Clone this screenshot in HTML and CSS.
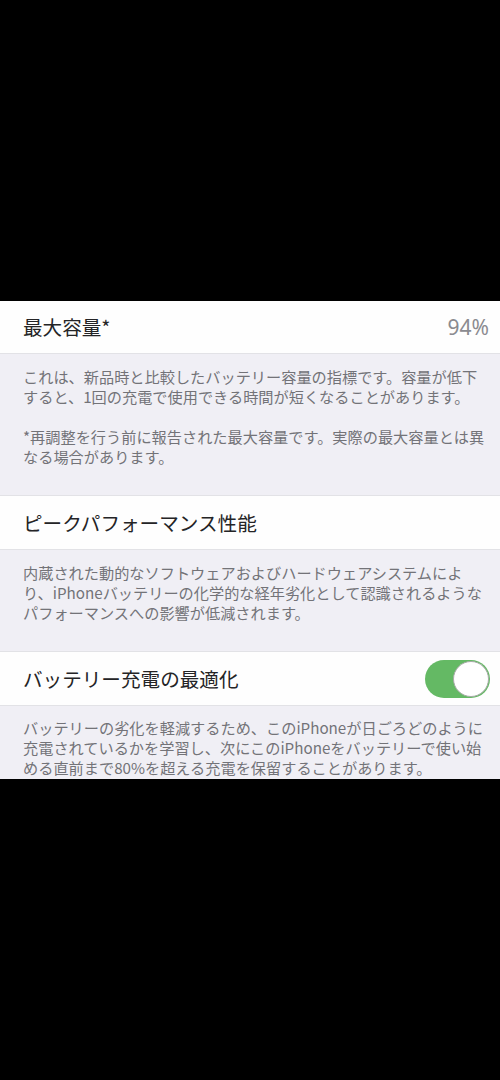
FILE: index.html
```html
<!DOCTYPE html>
<html lang="ja">
<head>
<meta charset="utf-8">
<title>バッテリーの状態</title>
<link rel="stylesheet" href="styles.css">
</head>
<body>
<div class="screen">
  <div class="top-black"></div>
  <div class="panel">
    <div class="row row-first">
      <span class="row-title">最大容量*</span>
      <span class="row-value">94%</span>
    </div>
    <div class="footer">
      <p>これは、新品時と比較したバッテリー容量の指標です。容量が低下すると、1回の充電で使用できる時間が短くなることがあります。</p>
      <p>*再調整を行う前に報告された最大容量です。実際の最大容量とは異なる場合があります。</p>
    </div>
    <div class="row">
      <span class="row-title">ピークパフォーマンス性能</span>
    </div>
    <div class="footer">
      <p>内蔵された動的なソフトウェアおよびハードウェアシステムにより、iPhoneバッテリーの化学的な経年劣化として認識されるようなパフォーマンスへの影響が低減されます。</p>
    </div>
    <div class="row">
      <span class="row-title">バッテリー充電の最適化</span>
      <span class="toggle"><span class="knob"></span></span>
    </div>
    <div class="footer footer-last">
      <p>バッテリーの劣化を軽減するため、このiPhoneが日ごろどのように充電されているかを学習し、次にこのiPhoneをバッテリーで使い始める直前まで80%を超える充電を保留することがあります。</p>
    </div>
  </div>
</div>
</body>
</html>
```
FILE: styles.css
```css
html, body {
  margin: 0;
  padding: 0;
  background: #000;
}
body {
  width: 500px;
  height: 1080px;
  overflow: hidden;
  font-family: "Noto Sans CJK JP", "Noto Sans", sans-serif;
}
.screen {
  display: flex;
  flex-direction: column;
}
.top-black {
  height: 301px;
  background: #000;
}
.panel {
  background: #f0eff5;
  display: flex;
  flex-direction: column;
}
.row {
  height: 55px;
  box-sizing: border-box;
  background: #fefefe;
  border-top: 1px solid #e2e2e6;
  border-bottom: 1px solid #e2e2e6;
  display: flex;
  align-items: center;
  justify-content: space-between;
  padding: 0 10px 0 23px;
}
.row-first {
  height: 53px;
  border-top: none;
}
.row-title {
  font-size: 19.6px;
  color: #242426;
  line-height: 1;
}
.row-value {
  font-family: "Noto Sans", sans-serif;
  font-size: 21px;
  color: #8b8b90;
  line-height: 1;
  padding-right: 1px;
}
.toggle {
  width: 65px;
  height: 38px;
  box-sizing: border-box;
  border-radius: 19px;
  background: #64b964;
  display: flex;
  align-items: center;
  justify-content: flex-end;
  padding: 1px;
}
.knob {
  width: 36px;
  height: 36px;
  box-sizing: border-box;
  border-radius: 50%;
  background: #fff;
  border: 1.5px solid #a8aaa8;
}
.footer {
  padding: 12px 10px 29px 23px;
  color: #737378;
  font-size: 15.2px;
  line-height: 20px;
}
.footer p {
  margin: 0;
}
.footer p + p {
  margin-top: 20px;
}
.footer-last {
  height: 73px;
  box-sizing: border-box;
  padding-top: 11px;
  overflow: hidden;
}
```
